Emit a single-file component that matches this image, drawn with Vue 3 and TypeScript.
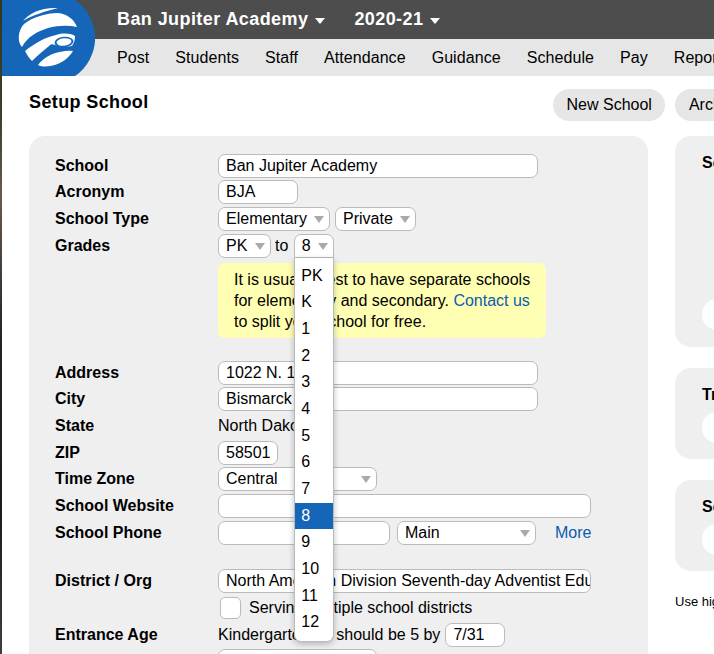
<script setup lang="ts">
const navItems: string[] = ['Post', 'Students', 'Staff', 'Attendance', 'Guidance', 'Schedule', 'Pay', 'Reports']
const grades: string[] = ['PK', 'K', '1', '2', '3', '4', '5', '6', '7', '8', '9', '10', '11', '12']
</script>

<template>
  <div class="app">
    <div class="strip"></div>
    <div class="main">
      <svg class="logo" viewBox="2 0 93 76" width="93" height="76">
        <path fill="#1565b9" d="M0 0H75A46 46 0 0 1 75 76H0Z" />
        <g fill="#fff">
          <path d="M23 21C29 13 42 7 58 8C46 11 33 15 23 21Z" />
          <path d="M24 24C33 17 46 13 58 13C67 14 74 19 77 27C62 24 45 27 33 35C28 38 24 43 22 47C17 42 18 30 24 24Z" />
          <path d="M25 51C35 43 46 37 56 35C63 33 70 33 75 36C75 40 74 43 72 46C66 47 60 47 55 45C52 44 51 44 49 46C43 51 37 56 32 61C29 58 27 55 25 51Z" />
          <ellipse cx="64" cy="42" rx="9.500" ry="5.200" transform="rotate(-6 64 42)" fill="#1565b9" />
          <ellipse cx="64" cy="42" rx="7.500" ry="3.700" transform="rotate(-6 64 42)" />
          <path d="M38 65C43 58 52 53 62 51.500C66 50.500 70 50.500 73 51C69 58 62 63 53 65.500C47 67 42 67 38 65Z" />
        </g>
      </svg>

      <header class="topbar">
        <span class="top-item">Ban Jupiter Academy<i class="top-caret"></i></span>
        <span class="top-item">2020-21<i class="top-caret"></i></span>
      </header>
      <nav class="nav">
        <a v-for="item in navItems" :key="item" class="nav-link">{{ item }}</a>
      </nav>

      <div class="title-row">
        <h1 class="title">Setup School</h1>
        <div class="actions">
          <button class="pill">New School</button>
          <button class="pill">Archive</button>
        </div>
      </div>

      <div class="columns">
        <section class="form-panel">
          <div class="row">
            <label class="lbl">School</label>
            <div class="fld"><input class="inp w320" value="Ban Jupiter Academy" readonly /></div>
          </div>
          <div class="row">
            <label class="lbl">Acronym</label>
            <div class="fld"><input class="inp w80" value="BJA" readonly /></div>
          </div>
          <div class="row">
            <label class="lbl">School Type</label>
            <div class="fld">
              <div class="sel sel-type">Elementary<i class="caret"></i></div>
              <div class="sel sel-private">Private<i class="caret"></i></div>
            </div>
          </div>
          <div class="row">
            <label class="lbl">Grades</label>
            <div class="fld">
              <div class="sel sel-pk">PK<i class="caret"></i></div>
              <span class="to">to</span>
              <div class="grade-wrap">
                <div class="sel sel-open">8<i class="caret"></i></div>
                <ul class="menu">
                  <li v-for="g in grades" :key="g" class="opt" :class="{ active: g === '8' }">{{ g }}</li>
                </ul>
              </div>
            </div>
          </div>
          <div class="note">
            It is usually best to have separate schools<br />
            for elementary and secondary. <a class="link">Contact us</a><br />
            to split your school for free.
          </div>

          <div class="row">
            <label class="lbl">Address</label>
            <div class="fld"><input class="inp w320" value="1022 N. 12th" readonly /></div>
          </div>
          <div class="row">
            <label class="lbl">City</label>
            <div class="fld"><input class="inp w320" value="Bismarck" readonly /></div>
          </div>
          <div class="row">
            <label class="lbl">State</label>
            <div class="fld">North Dakota</div>
          </div>
          <div class="row">
            <label class="lbl">ZIP</label>
            <div class="fld"><input class="inp w60" value="58501" readonly /></div>
          </div>
          <div class="row">
            <label class="lbl">Time Zone</label>
            <div class="fld"><div class="sel sel-tz">Central<i class="caret"></i></div></div>
          </div>
          <div class="row">
            <label class="lbl">School Website</label>
            <div class="fld"><input class="inp w373" readonly /></div>
          </div>
          <div class="row">
            <label class="lbl">School Phone</label>
            <div class="fld">
              <input class="inp w172" readonly />
              <div class="sel sel-main">Main<i class="caret"></i></div>
              <a class="link more">More</a>
            </div>
          </div>

          <div class="row district">
            <label class="lbl">District / Org</label>
            <div class="fld"><input class="inp w373" value="North American Division Seventh-day Adventist Education" readonly /></div>
          </div>
          <div class="row">
            <span class="lbl"></span>
            <div class="fld"><span class="check"></span><span class="check-text">Serving multiple school districts</span></div>
          </div>
          <div class="row">
            <label class="lbl">Entrance Age</label>
            <div class="fld">Kindergarteners should be 5 by<input class="inp w60 date" value="7/31" readonly /></div>
          </div>
          <div class="row">
            <label class="lbl">Colors</label>
            <div class="fld"><input class="inp w159" readonly /></div>
          </div>
        </section>

        <aside class="side">
          <section class="side-panel first">
            <h2 class="side-title">Se</h2>
            <div class="side-box"></div>
          </section>
          <section class="side-panel">
            <h2 class="side-title">Tr</h2>
            <div class="side-box"></div>
          </section>
          <section class="side-panel">
            <h2 class="side-title">Se</h2>
            <div class="side-box"></div>
          </section>
          <p class="side-note">Use hig</p>
        </aside>
      </div>
    </div>
  </div>
</template>

<style>
html, body { margin: 0; overflow: hidden; background: #fff; }
</style>

<style scoped>
.app {
  display: flex;
  width: 714px;
  height: 654px;
  overflow: hidden;
  font-family: "Liberation Sans", Arial, sans-serif;
  font-size: 16px;
  color: #000;
  background: #fff;
}
.strip {
  flex: 0 0 2px;
  background: linear-gradient(180deg, #2c3a22 0%, #39412c 18%, #6b5a4c 30%, #20242a 52%, #1b1b1d 78%, #3a3f44 100%);
}
.main {
  position: relative;
  flex: 0 0 712px;
  min-width: 0;
  overflow: hidden;
}
.logo {
  position: absolute;
  top: 0;
  left: 0;
  z-index: 2;
  display: block;
}
.topbar {
  display: flex;
  align-items: center;
  gap: 29px;
  height: 39px;
  padding-left: 115px;
  background: #4d4d4d;
  color: #fff;
  font-size: 18px;
  font-weight: 700;
  letter-spacing: 0.42px;
}
.top-item { display: flex; align-items: center; white-space: nowrap; }
.top-caret {
  width: 0;
  height: 0;
  margin-left: 7px;
  margin-top: 2px;
  border-left: 5px solid transparent;
  border-right: 5px solid transparent;
  border-top: 6px solid #fff;
}
.nav {
  display: flex;
  align-items: center;
  gap: 26px;
  height: 37px;
  padding-left: 115px;
  background: #e6e6e6;
  white-space: nowrap;
}
.nav-link { color: #000; letter-spacing: 0.07px; }
.title-row {
  display: flex;
  align-items: center;
  height: 60px;
  padding-left: 27px;
}
.title {
  flex: 0 0 524px;
  margin: -8px 0 0;
  font-size: 18px;
  font-weight: 700;
  letter-spacing: 0.38px;
}
.actions { display: flex; gap: 10px; margin-top: -2px; }
.pill {
  height: 32px;
  padding: 0 13.500px;
  border: 0;
  border-radius: 16px;
  background: #e6e6e6;
  color: #000;
  font: inherit;
  white-space: nowrap;
}
.columns {
  display: flex;
  gap: 27px;
  padding-left: 27px;
  align-items: flex-start;
}
.form-panel {
  flex: 0 0 619px;
  box-sizing: border-box;
  height: 560px;
  padding: 16.500px 0 0 26px;
  border-radius: 16px;
  background: #efefef;
}
.row {
  display: flex;
  align-items: center;
  height: 26.670px;
}
.lbl {
  flex: 0 0 163px;
  font-weight: 700;
  white-space: nowrap;
}
.fld {
  display: flex;
  align-items: center;
  white-space: nowrap;
}
.inp {
  box-sizing: border-box;
  height: 24px;
  padding: 0 0 0 7px;
  border: 1px solid #bbb;
  border-radius: 7px;
  background: #fff;
  color: #000;
  font: inherit;
  outline: none;
}
.w320 { width: 320px; }
.w80 { width: 80px; }
.w60 { width: 60px; }
.w373 { width: 373px; }
.w172 { width: 172px; }
.w159 { width: 159px; }
.date { margin-left: 5px; }
.sel {
  position: relative;
  box-sizing: border-box;
  height: 24px;
  line-height: 22px;
  padding-left: 7px;
  border: 1px solid #bbb;
  border-radius: 7px;
  background: #fff;
}
.caret {
  position: absolute;
  top: 8px;
  right: 5px;
  width: 0;
  height: 0;
  border-left: 5.500px solid transparent;
  border-right: 5.500px solid transparent;
  border-top: 7px solid #aaa;
}
.sel-type { width: 112px; }
.sel-private { width: 81px; margin-left: 5px; }
.sel-pk { width: 53px; }
.sel-tz { width: 159px; }
.sel-main { width: 139px; margin-left: 7px; }
.to { margin: 0 5.500px 0 4px; }
.grade-wrap { position: relative; z-index: 3; }
.sel-open {
  width: 40px;
  border-radius: 7px 7px 0 0;
}
.menu {
  position: absolute;
  top: 24px;
  left: 0;
  box-sizing: border-box;
  width: 40px;
  height: 384px;
  margin: 0;
  padding: 5px 0;
  list-style: none;
  background: #fff;
  border: 1px solid #bbb;
  border-top-width: 0;
  border-radius: 0 0 7px 7px;
  box-shadow: 0 2px 6px rgba(0, 0, 0, 0.25);
}
.opt {
  height: 26.670px;
  line-height: 26.670px;
  padding-left: 6.500px;
}
.opt.active {
  background: #1565b9;
  color: #fff;
}
.note {
  box-sizing: border-box;
  width: 328px;
  height: 75px;
  margin: 4.200px 0 21.200px 163px;
  padding: 6px 0 0 16px;
  border-radius: 7px;
  background: #ffffb3;
  line-height: 21px;
  white-space: nowrap;
}
.link { color: #0a5cb0; }
.more { margin-left: 19px; }
.district { margin-top: 22px; }
.check {
  box-sizing: border-box;
  width: 21px;
  height: 22px;
  margin-left: 2px;
  border: 1px solid #bbb;
  border-radius: 5px;
  background: #fff;
}
.check-text { margin-left: 8px; }
.side {
  flex: 0 0 200px;
}
.side-panel {
  box-sizing: border-box;
  height: 91px;
  margin-bottom: 21px;
  padding: 18px 0 0 27px;
  border-radius: 16px;
  background: #efefef;
}
.side-panel.first {
  display: flex;
  flex-direction: column;
  justify-content: space-between;
  height: 211px;
  padding-bottom: 17px;
}
.side-title {
  margin: 0;
  font-size: 16px;
  font-weight: 700;
  line-height: 18px;
}
.side-box {
  height: 31px;
  margin-top: 8px;
  border-radius: 15px;
  background: #fff;
}
.side-note {
  margin: 23px 0 0;
  font-size: 13px;
  line-height: 16px;
}
</style>
